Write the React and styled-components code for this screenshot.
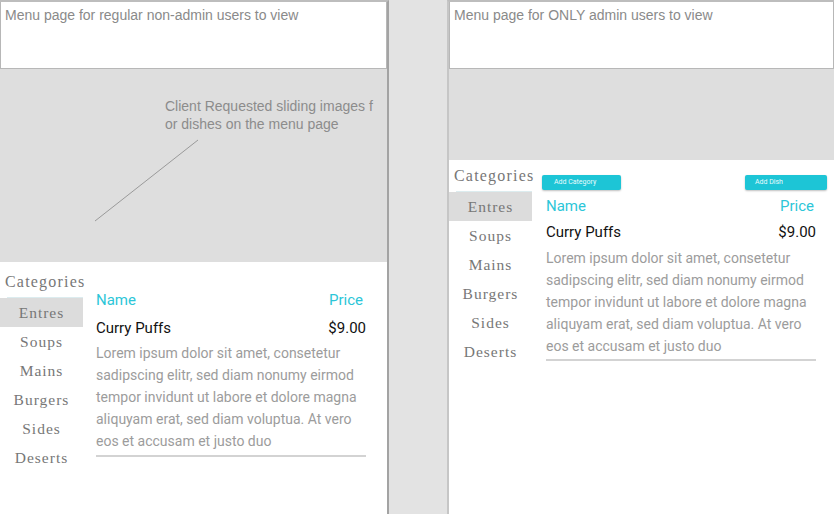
import React from 'react';
import styled, { createGlobalStyle } from 'styled-components';

const Global = createGlobalStyle`
    html, body {
        margin: 0;
        padding: 0;
        background: #e3e3e3;
        font-family: "Liberation Sans", Arial, sans-serif;
    }
`

const Page = styled.div`
    display: flex;
    width: 834px;
    height: 514px;
    overflow: hidden;
    background: #e3e3e3;
`

const Panel = styled.div`
    display: flex;
    flex-direction: column;
    box-sizing: border-box;
    background: #ffffff;
    border-top: 2px solid #bdbdbd;
    width: ${p => p.$width}px;
    margin-left: ${p => p.$offset || 0}px;
    border-right: ${p => p.$rightEdge ? '2px solid #a3a3a3' : 'none'};
    border-left: ${p => p.$leftEdge ? '2px solid #c6c6c6' : 'none'};
`

const Note = styled.div`
    box-sizing: border-box;
    height: 67px;
    border: 1px solid #b7b7b7;
    border-top: none;
    padding: 5px 4px;
    color: #8a8a8a;
    font-size: 14px;
    line-height: 16px;
`

const Slider = styled.div`
    position: relative;
    height: ${p => p.$height}px;
    background: #dedede;
`

const Annotation = styled.div`
    position: absolute;
    left: 165px;
    top: 28px;
    color: #8c8c8c;
    font-size: 14px;
    line-height: 18px;
    white-space: nowrap;
`

const Pointer = styled.svg`
    position: absolute;
    left: 0;
    top: 0;
`

const Content = styled.div`
    display: flex;
    flex: 1;
`

const Sidebar = styled.div`
    width: 83px;
    display: flex;
    flex-direction: column;
    padding-top: ${p => p.$top}px;
    font-family: "Liberation Serif", "DejaVu Serif", serif;
    color: #777;
`

const SideTitle = styled.div`
    font-size: 16px;
    line-height: 20px;
    letter-spacing: 1.2px;
    padding-left: 5px;
    margin-bottom: 5px;
    white-space: nowrap;
`

const CatList = styled.div`
    border-top: 1px solid #dcecef;
    margin-left: 7px;
`

const Cat = styled.div`
    height: 29px;
    line-height: 29px;
    margin-left: -7px;
    text-align: center;
    font-size: 15.5px;
    letter-spacing: 1px;
    background: ${p => p.$active ? '#dcdcdc' : 'transparent'};
`

const Main = styled.div`
    width: 270px;
    margin-left: ${p => p.$left}px;
    padding-top: ${p => p.$top}px;
    display: flex;
    flex-direction: column;
`

const Buttons = styled.div`
    display: flex;
    justify-content: space-between;
    margin: 0 -11px 6px -4px;
`

const Btn = styled.div`
    width: ${p => p.$w}px;
    height: 15px;
    box-sizing: border-box;
    padding-left: ${p => p.$pad}px;
    background: #1dc5d6;
    border-radius: 2px;
    box-shadow: 0 1px 2px rgba(0,0,0,0.25);
    color: #e9fbfd;
    font-family: Roboto, sans-serif;
    font-size: 7px;
    line-height: 15px;
`

const Row = styled.div`
    display: flex;
    justify-content: space-between;
    font-family: Roboto, "Liberation Sans", sans-serif;
    font-size: 15px;
    line-height: 20px;
    color: ${p => p.$head ? '#2cc6d8' : '#111'};
    margin-bottom: ${p => p.$gap}px;
    padding-right: ${p => p.$pr || 0}px;
`

const Desc = styled.div`
    font-family: Roboto, "Liberation Sans", sans-serif;
    font-size: 14px;
    line-height: 22px;
    color: #9c9c9c;
    padding-bottom: ${p => p.$pb}px;
    border-bottom: 2px solid #d3d3d3;
`

const cats = ['Entres', 'Soups', 'Mains', 'Burgers', 'Sides', 'Deserts'];

const Menu = ({ admin }) => (
    <Content>
        <Sidebar $top={admin ? 6 : 10}>
            <SideTitle>Categories</SideTitle>
            <CatList>
                {cats.map((c, i) => <Cat key={c} $active={i === 0}>{c}</Cat>)}
            </CatList>
        </Sidebar>
        <Main $top={admin ? 15 : 28} $left={admin ? 14 : 13}>
            {admin && (
                <Buttons>
                    <Btn $w={79} $pad={12}>Add Category</Btn>
                    <Btn $w={82} $pad={10}>Add Dish</Btn>
                </Buttons>
            )}
            <Row $head $gap={admin ? 6 : 8} $pr={admin ? 2 : 3}>
                <span>Name</span>
                <span>Price</span>
            </Row>
            <Row $gap={admin ? 5 : 4}>
                <span>Curry Puffs</span>
                <span>$9.00</span>
            </Row>
            <Desc $pb={admin ? 2 : 3}>
                Lorem ipsum dolor sit amet, consetetur sadipscing elitr, sed diam nonumy eirmod tempor invidunt ut labore et dolore magna aliquyam erat, sed diam voluptua. At vero eos et accusam et justo duo
            </Desc>
        </Main>
    </Content>
)

const App = () => (
    <Page>
        <Global />
        <Panel $width={389} $rightEdge>
            <Note>Menu page for regular non-admin users to view</Note>
            <Slider $height={193}>
                <Annotation>
                    Client Requested sliding images f<br />or dishes on the menu page
                </Annotation>
                <Pointer width="387" height="193">
                    <line x1="95" y1="152" x2="198" y2="71" stroke="#9a9a9a" strokeWidth="1" />
                </Pointer>
            </Slider>
            <Menu />
        </Panel>
        <Panel $width={387} $offset={58} $leftEdge>
            <Note>Menu page for ONLY admin users to view</Note>
            <Slider $height={91} />
            <Menu admin />
        </Panel>
    </Page>
)

export default App;
